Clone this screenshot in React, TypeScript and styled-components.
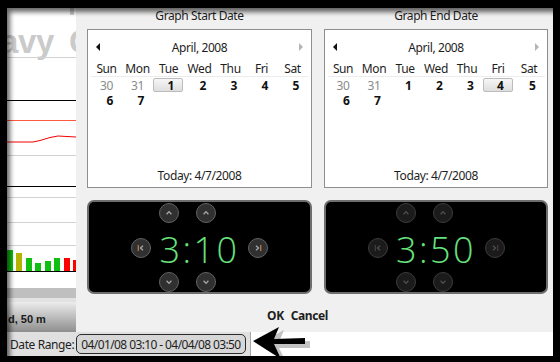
import React from 'react'
import styled, { createGlobalStyle, css } from 'styled-components'

const GlobalStyle = createGlobalStyle`
  html, body {
    margin: 0;
    padding: 0;
    background: #000;
  }
  body {
    font-family: 'Noto Sans', 'Open Sans', sans-serif;
    font-size: 12px;
    letter-spacing: -0.4px;
    color: #1e1e1e;
  }
`

const Frame = styled.div`
  width: 560px;
  height: 362px;
  box-sizing: border-box;
  padding: 8px 7px 6px 7px;
  background: #000;
`
const Screen = styled.div`
  position: relative;
  height: 100%;
  display: grid;
  grid-template-columns: 69px 1fr;
  grid-template-rows: 324px 1fr;
  background: #fff;
  overflow: hidden;

  &::after {
    content: '';
    position: absolute;
    inset: 0;
    box-shadow: inset 5px 6px 5px -2px rgba(0, 0, 0, 0.6);
    pointer-events: none;
  }
`

/* ---------- background chart (left strip) ---------- */

const ChartColumn = styled.div`
  display: flex;
  flex-direction: column;
  background: #fff;
`
const ChartBand = styled.div`
  height: 10px;
  background: #bfbfbf;
  border-bottom: 4px solid #e2e2e2;
`
const LegendBar = styled.div`
  flex: 1;
  display: flex;
  align-items: center;
  padding: 4px 0 0 1px;
  background: linear-gradient(to bottom, #ececec, #8e8e8e);
  font-family: 'Liberation Sans', sans-serif;
  font-size: 11px;
  font-weight: bold;
  letter-spacing: 0;
  color: #1a1a1a;
  white-space: nowrap;
  overflow: hidden;
`

/* ---------- dialog ---------- */

const Dialog = styled.div`
  display: flex;
  flex-direction: column;
  background: #f0f0f0;
`
const Panes = styled.div`
  display: flex;
  gap: 12px;
  padding: 0 5px 0 11px;
`
const Pane = styled.div<{ $width: number }>`
  width: ${({ $width }) => $width}px;
  display: flex;
  flex-direction: column;
`
const PaneTitle = styled.div`
  height: 21px;
  line-height: 16px;
  text-align: center;
`
const Calendar = styled.div`
  height: 159px;
  box-sizing: border-box;
  display: flex;
  flex-direction: column;
  padding: 9px 0 3px;
  border: 1px solid #8e8e8e;
  background: #fff;
`
const MonthRow = styled.div`
  height: 16px;
  display: flex;
  align-items: center;
  justify-content: space-between;
  padding: 0 8px;
`
const NavArrow = styled.span<{ $dir: 'left' | 'right'; $muted?: boolean }>`
  width: 0;
  height: 0;
  border-top: 4px solid transparent;
  border-bottom: 4px solid transparent;
  ${({ $dir, $muted }) =>
    $dir === 'left'
      ? css`border-right: 4px solid ${$muted ? '#b4b4b4' : '#111'};`
      : css`border-left: 4px solid ${$muted ? '#b4b4b4' : '#111'};`}
`
const DayGrid = styled.div`
  display: grid;
  grid-template-columns: repeat(7, 31px);
  grid-auto-rows: 15px;
  justify-content: center;
  margin-top: 7px;
`
const HeadCell = styled.div`
  line-height: 14px;
  text-align: center;
  border-bottom: 1px solid #ececec;
`
const DayCell = styled.div<{ $other?: boolean; $selected?: boolean }>`
  line-height: 15px;
  padding-top: 1px;
  box-sizing: border-box;
  padding-right: 9px;
  text-align: right;
  font-weight: ${({ $other }) => ($other ? 'normal' : 'bold')};
  color: ${({ $other }) => ($other ? '#8a8a8a' : '#111')};

  ${({ $selected }) =>
    $selected &&
    css`
      margin: 1px 1px 0 0;
      padding-top: 0;
      line-height: 13px;
      padding-right: 8px;
      border: 1px solid #bcbcbc;
      border-radius: 2px;
      background: linear-gradient(to bottom, #f6f6f6, #dedede);
    `}
`
const Today = styled.div`
  margin-top: auto;
  line-height: 16px;
  text-align: center;
`

const Timer = styled.div`
  height: 94px;
  margin-top: 12px;
  box-sizing: border-box;
  display: flex;
  flex-direction: column;
  justify-content: space-between;
  padding-top: 1px;
  border: 2px solid #6e6e6e;
  border-radius: 7px;
  background: #000;
`
const ButtonRow = styled.div`
  display: flex;
  justify-content: center;
  gap: 17px;
  padding-right: 24px;
`
const MiddleRow = styled.div`
  display: flex;
  justify-content: center;
  align-items: center;
`
const TimeText = styled.div`
  width: 97px;
  text-align: center;
  font-family: 'Open Sans', 'DejaVu Sans', sans-serif;
  font-weight: 300;
  font-size: 36px;
  line-height: 20px;
  letter-spacing: 2.5px;
  color: #66e27c;
  transform: translateY(2px);
`
const RoundButton = styled.div<{ $dim?: boolean }>`
  width: 20px;
  height: 20px;
  box-sizing: border-box;
  border-radius: 50%;
  border: 1px solid ${({ $dim }) => ($dim ? '#3c3c3c' : '#626262')};
  background: ${({ $dim }) => ($dim ? '#1b1b1b' : '#303030')};
  display: flex;
  align-items: center;
  justify-content: center;

  svg {
    display: block;
  }
`

const Footer = styled.div`
  flex: 1;
  display: flex;
  justify-content: center;
  align-items: center;
  gap: 7px;
  padding: 4px 34px 0 0;
  font-weight: bold;
`

/* ---------- status bar ---------- */

const StatusRow = styled.div`
  grid-column: 1 / -1;
  position: relative;
  display: flex;
`
const StatusBar = styled.div`
  width: 244px;
  box-sizing: border-box;
  display: flex;
  align-items: center;
  gap: 2px;
  padding-left: 3px;
  background: #e0e0e0;
  border-right: 1px solid #a6a6a6;
  white-space: nowrap;
`
const RangeBox = styled.div`
  height: 20px;
  box-sizing: border-box;
  display: flex;
  align-items: center;
  padding: 0 4px;
  border: 1.5px solid #2a2a2a;
  border-radius: 5px;
  background: #d7d7d7;
  letter-spacing: -0.6px;
`
const Blank = styled.div`
  flex: 1;
  background: #fff;
`
const Pointer = styled.svg`
  position: absolute;
  left: 244px;
  top: -5px;
`

type Kind = 'up' | 'down' | 'first' | 'last'

const Chevron = ({ kind, dim }: { kind: Kind; dim?: boolean }) => {
  const stroke = dim ? '#505050' : '#a8a8a8'
  const bar = dim ? '#4a3a30' : '#b07a50'
  return (
    <svg width="18" height="18" viewBox="0 0 18 18" fill="none" strokeWidth="1.3">
      {kind === 'up' && <path d="M6.6 10.2 L9 7.6 L11.4 10.2" stroke={stroke} />}
      {kind === 'down' && <path d="M6.6 7.8 L9 10.4 L11.4 7.8" stroke={stroke} />}
      {kind === 'first' && (
        <>
          <path d="M6.3 6 V12" stroke={bar} />
          <path d="M11 6.8 L8.5 9 L11 11.2" stroke={stroke} />
        </>
      )}
      {kind === 'last' && (
        <>
          <path d="M11.7 6 V12" stroke={bar} />
          <path d="M7 6.8 L9.5 9 L7 11.2" stroke={stroke} />
        </>
      )}
    </svg>
  )
}

const Btn = ({ kind, dim }: { kind: Kind; dim?: boolean }) => (
  <RoundButton $dim={dim}>
    <Chevron kind={kind} dim={dim} />
  </RoundButton>
)

const BackgroundChart = () => {
  const bars = [
    { x: 7, top: 250, c: '#10c010' },
    { x: 16, top: 253, c: '#b4b400' },
    { x: 26, top: 258, c: '#10c010' },
    { x: 35, top: 263, c: '#10c010' },
    { x: 45, top: 261, c: '#10c010' },
    { x: 54, top: 258, c: '#10c010' },
    { x: 64, top: 258, c: '#ff0000' },
    { x: 73, top: 260, c: '#ff0000' },
  ]
  const grey = [57, 155, 197, 222, 245]
  return (
    <svg width="69" height="280" viewBox="7 8 69 280">
      <rect x="7" y="8" width="69" height="280" fill="#fff" />
      <g fontFamily="Liberation Sans, sans-serif" fontWeight="bold" fontSize="33" fill="#cacaca">
        <text x="0" y="53">avy</text>
        <text x="69" y="53">C</text>
      </g>
      <rect x="70" y="8" width="4" height="7" fill="#cfcfcf" />
      {grey.map((y) => (
        <line key={y} x1="7" x2="76" y1={y + 0.5} y2={y + 0.5} stroke="#d2d2d2" />
      ))}
      <line x1="7" x2="76" y1="100.5" y2="100.5" stroke="#000" />
      <line x1="7" x2="76" y1="186.5" y2="186.5" stroke="#000" />
      <line x1="7" x2="76" y1="120.5" y2="120.5" stroke="#ff5a3c" />
      <path d="M7 142 L33 142 L40 140.5 L50 137.5 L58 136 L76 137" stroke="#f00000" fill="none" />
      {bars.map((b) => (
        <rect key={b.x} x={b.x} y={b.top} width="6" height={271 - b.top} fill={b.c} />
      ))}
      <line x1="7" x2="76" y1="271.5" y2="271.5" stroke="#000" />
    </svg>
  )
}

const heads = ['Sun', 'Mon', 'Tue', 'Wed', 'Thu', 'Fri', 'Sat']

const MonthCalendar = ({ selected }: { selected: number }) => (
  <Calendar>
    <MonthRow>
      <NavArrow $dir="left" />
      <span>April, 2008</span>
      <NavArrow $dir="right" $muted />
    </MonthRow>
    <DayGrid>
      {heads.map((h) => (
        <HeadCell key={h}>{h}</HeadCell>
      ))}
      <DayCell $other>30</DayCell>
      <DayCell $other>31</DayCell>
      {[1, 2, 3, 4, 5, 6, 7].map((d) => (
        <DayCell key={d} $selected={d === selected}>
          {d}
        </DayCell>
      ))}
    </DayGrid>
    <Today>Today: 4/7/2008</Today>
  </Calendar>
)

const TimePicker = ({ time, dim }: { time: string; dim?: boolean }) => (
  <Timer>
    <ButtonRow>
      <Btn kind="up" dim={dim} />
      <Btn kind="up" dim={dim} />
    </ButtonRow>
    <MiddleRow>
      <Btn kind="first" dim={dim} />
      <TimeText>{time}</TimeText>
      <Btn kind="last" dim={dim} />
    </MiddleRow>
    <ButtonRow>
      <Btn kind="down" dim={dim} />
      <Btn kind="down" dim={dim} />
    </ButtonRow>
  </Timer>
)

const App = () => (
  <>
    <GlobalStyle />
    <Frame>
      <Screen>
        <ChartColumn>
          <BackgroundChart />
          <ChartBand />
          <LegendBar>d, 50 m</LegendBar>
        </ChartColumn>

        <Dialog>
          <Panes>
            <Pane $width={225}>
              <PaneTitle>Graph Start Date</PaneTitle>
              <MonthCalendar selected={1} />
              <TimePicker time="3:10" />
            </Pane>
            <Pane $width={224}>
              <PaneTitle>Graph End Date</PaneTitle>
              <MonthCalendar selected={4} />
              <TimePicker time="3:50" dim />
            </Pane>
          </Panes>
          <Footer>
            <span>OK</span>
            <span>Cancel</span>
          </Footer>
        </Dialog>

        <StatusRow>
          <StatusBar>
            <span>Date Range:</span>
            <RangeBox>04/01/08 03:10 - 04/04/08 03:50</RangeBox>
          </StatusBar>
          <Blank />
          <Pointer width="64" height="34" viewBox="0 0 64 34">
            <path
              d="M4 15 L30 1 L25 13 L56 12 L56 19 L25 19 L32 33 Z"
              fill="#9a9a9a"
              opacity="0.6"
              transform="translate(3 2)"
            />
            <path d="M2 14 L28 0 L23 12 L54 11 L54 17 L23 17 L30 32 Z" fill="#000" />
          </Pointer>
        </StatusRow>
      </Screen>
    </Frame>
  </>
)

export default App
